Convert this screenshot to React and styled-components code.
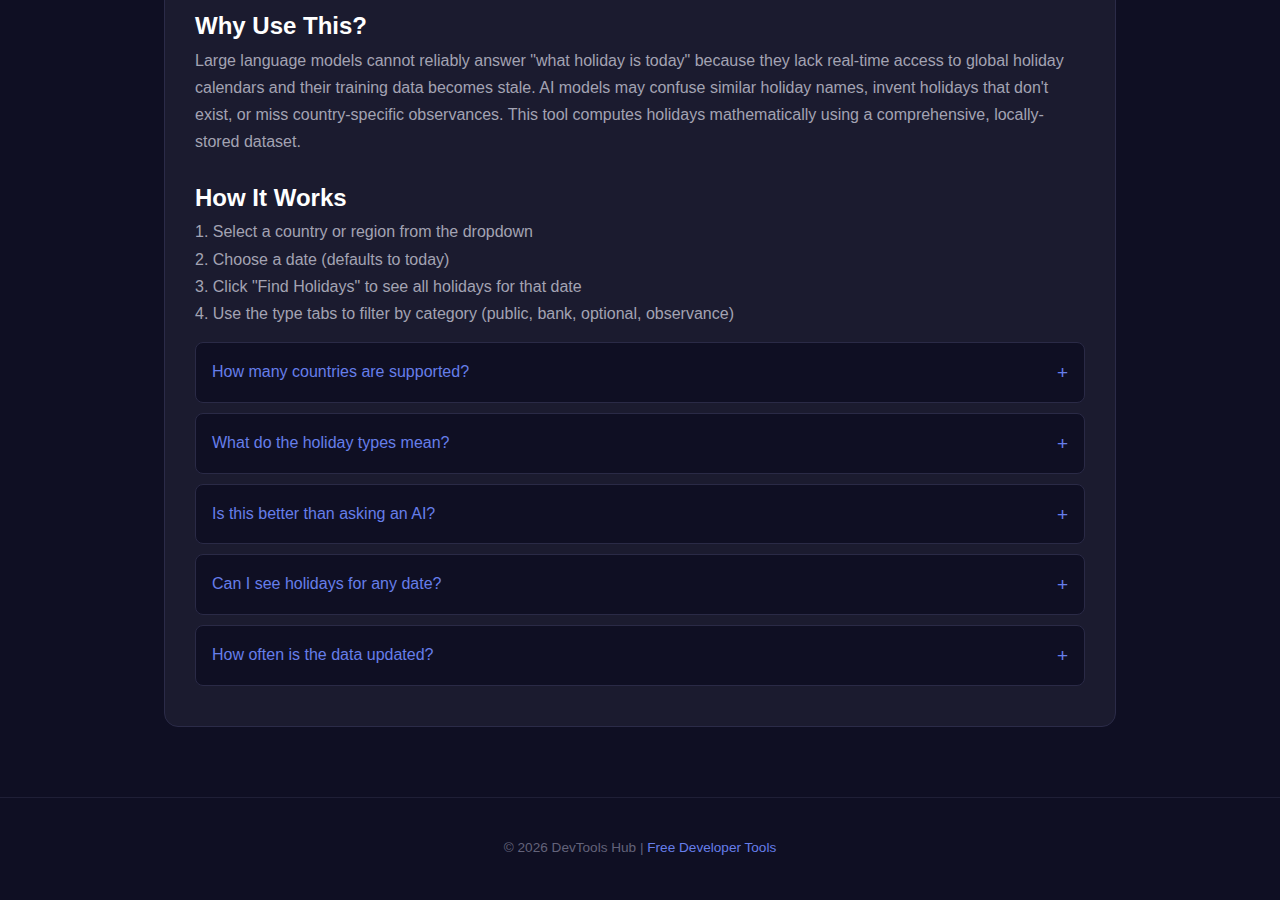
import React from "react";
import styled, { createGlobalStyle } from "styled-components";

const GlobalStyle = createGlobalStyle`
  * { box-sizing: border-box; }
  html, body {
    margin: 0;
    padding: 0;
    background: #0f0f23;
    color: #a0a0b0;
    font-family: "Liberation Sans", Arial, Helvetica, sans-serif;
    font-size: 16px;
    line-height: 1.7;
  }
`;

const Page = styled.div`
  min-height: 900px;
  display: flex;
  flex-direction: column;
`;

const Main = styled.main`
  padding-bottom: 70px;
`;

const Card = styled.section`
  width: 952px;
  margin: -19px auto 0;
  padding: 30px;
  background: #1b1b2f;
  border: 1px solid #2b2b48;
  border-radius: 14px;
`;

const Block = styled.div`
  margin-bottom: ${(p) => p.$gap || 0}px;
`;

const Heading = styled.h2`
  margin: 0 0 6px;
  font-size: 24px;
  font-weight: 700;
  line-height: 1.2;
  color: #ffffff;
`;

const Text = styled.p`
  margin: 0;
  color: #a3a3b3;
`;

const Steps = styled.ol`
  margin: 0;
  padding: 0;
  list-style: none;
`;

const Step = styled.li`
  color: #a3a3b3;
`;

const FaqList = styled.div`
  display: flex;
  flex-direction: column;
`;

const FaqItem = styled.div`
  margin-bottom: 10px;
  background: #0f0f23;
  border: 1px solid #2a2a46;
  border-radius: 8px;
`;

const FaqQuestion = styled.button`
  width: 100%;
  display: flex;
  align-items: center;
  justify-content: space-between;
  padding: 16px;
  background: none;
  border: none;
  font: inherit;
  line-height: 26.8px;
  color: #667eea;
  text-align: left;
  cursor: pointer;
`;

const Plus = styled.span`
  font-size: 19px;
  line-height: 1;
  color: #667eea;
`;

const Footer = styled.footer`
  border-top: 1px solid #1f1f36;
  padding: 38px 20px 40px;
  text-align: center;
  font-size: 13.6px;
  color: #63637a;
`;

const FooterLink = styled.a`
  color: #667eea;
  text-decoration: none;
`;

const steps = [
  "1. Select a country or region from the dropdown",
  "2. Choose a date (defaults to today)",
  '3. Click "Find Holidays" to see all holidays for that date',
  "4. Use the type tabs to filter by category (public, bank, optional, observance)",
];

const questions = [
  "How many countries are supported?",
  "What do the holiday types mean?",
  "Is this better than asking an AI?",
  "Can I see holidays for any date?",
  "How often is the data updated?",
];

export default function App() {
  return (
    <>
      <GlobalStyle />
      <Page>
        <Main>
          <Card>
            <Block $gap={28}>
              <Heading>Why Use This?</Heading>
              <Text>
                Large language models cannot reliably answer "what holiday is today" because they lack
                real-time access to global holiday calendars and their training data becomes stale. AI
                models may confuse similar holiday names, invent holidays that don't exist, or miss
                country-specific observances. This tool computes holidays mathematically using a
                comprehensive, locally-stored dataset.
              </Text>
            </Block>
            <Block $gap={15}>
              <Heading>How It Works</Heading>
              <Steps>
                {steps.map((s) => (
                  <Step key={s}>{s}</Step>
                ))}
              </Steps>
            </Block>
            <FaqList>
              {questions.map((q) => (
                <FaqItem key={q}>
                  <FaqQuestion type="button">
                    <span>{q}</span>
                    <Plus>+</Plus>
                  </FaqQuestion>
                </FaqItem>
              ))}
            </FaqList>
          </Card>
        </Main>
        <Footer>
          © 2026 DevTools Hub | <FooterLink href="#">Free Developer Tools</FooterLink>
        </Footer>
      </Page>
    </>
  );
}
